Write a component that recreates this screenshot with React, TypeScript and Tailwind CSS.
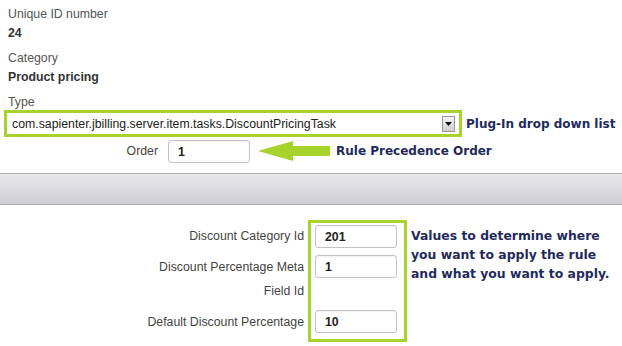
import React from 'react';

const lime = 'border-[#a8d22c]';

function Field({ label, value }: { label: string; value: string }) {
  return (
    <div className="flex flex-col">
      <div className="leading-4 text-[#555]">{label}</div>
      <div className="mt-[3px] leading-4 font-bold text-[#333]">{value}</div>
    </div>
  );
}

function TextBox({ value }: { value: string }) {
  return (
    <div className="w-[82px] h-[23px] rounded-[3px] border border-[#c4c4c4] bg-white flex items-center pl-[9px] pt-[2px] font-bold text-[#222] shadow-[inset_0_1px_2px_rgba(0,0,0,0.06)]">
      {value}
    </div>
  );
}

function Note({ children, className = '' }: { children: React.ReactNode; className?: string }) {
  return (
    <div className={`font-['DejaVu_Sans',sans-serif] font-bold text-[#1f2a5e] whitespace-nowrap ${className}`}>
      {children}
    </div>
  );
}

function LeftArrow() {
  return (
    <svg width="76" height="24" viewBox="0 0 76 24" className="shrink-0">
      <polygon points="2,12 37,2 37,7 74,7 74,17 37,17 37,22" fill="#a8d22c" />
    </svg>
  );
}

export default function App() {
  return (
    <div className="w-[622px] h-[346px] overflow-hidden bg-white font-['Liberation_Sans',Arial,sans-serif] text-[12.3px]">
      {/* plug-in details */}
      <div className="pl-2 pt-[6px] flex flex-col gap-[9px]">
        <Field label="Unique ID number" value="24" />
        <Field label="Category" value="Product pricing" />
        <div className="leading-4 text-[#555]">Type</div>
      </div>

      <div className="flex items-center h-[27px] pl-1">
        <div className={`w-[458px] h-[27px] border-[3px] ${lime} bg-white flex items-center`}>
          <div className="flex-1 pl-[5px] pt-[1px] text-[#222]">
            com.sapienter.jbilling.server.item.tasks.DiscountPricingTask
          </div>
          <div className="w-[13px] h-[16px] mr-[4px] border border-[#9a9a9a] bg-gradient-to-b from-[#f4f4f4] to-[#cfcfcf] flex items-center justify-center">
            <svg width="7" height="4" viewBox="0 0 7 4">
              <polygon points="0,0 7,0 3.5,4" fill="#111" />
            </svg>
          </div>
        </div>
        <Note className="ml-[4px] text-[12px]">Plug-In drop down list</Note>
      </div>

      <div className="flex items-center mt-[2px] h-[24px]">
        <div className="w-[158px] text-right text-[#444]">Order</div>
        <div className="ml-[10px]">
          <TextBox value="1" />
        </div>
        <div className="ml-[6px]">
          <LeftArrow />
        </div>
        <Note className="ml-[4px] text-[12px]">Rule Precedence Order</Note>
      </div>

      {/* section header bar */}
      <div className="mt-[10px] h-[32px] border-y border-[#b0b0b4] bg-gradient-to-b from-[#e8e8ea] to-[#cdcdd5]" />

      {/* parameters */}
      <div className="flex mt-[15px]">
        <div className="w-[304px] text-right text-[#444] flex flex-col pt-[8px]">
          <div className="leading-4">Discount Category Id</div>
          <div className="leading-4 mt-[15px]">Discount Percentage Meta</div>
          <div className="leading-4 mt-[8px]">Field Id</div>
          <div className="leading-4 mt-[15px]">Default Discount Percentage</div>
        </div>
        <div className={`ml-[4px] w-[99px] h-[122px] border-[3px] ${lime} flex flex-col pl-[4px] pt-[2px]`}>
          <TextBox value="201" />
          <div className="mt-[7px]">
            <TextBox value="1" />
          </div>
          <div className="mt-[32px]">
            <TextBox value="10" />
          </div>
        </div>
        <Note className="ml-[4px] pt-[6px] leading-[19px] text-[12.4px]">
          Values to determine where
          <br />
          you want to apply the rule
          <br />
          and what you want to apply.
        </Note>
      </div>
    </div>
  );
}
